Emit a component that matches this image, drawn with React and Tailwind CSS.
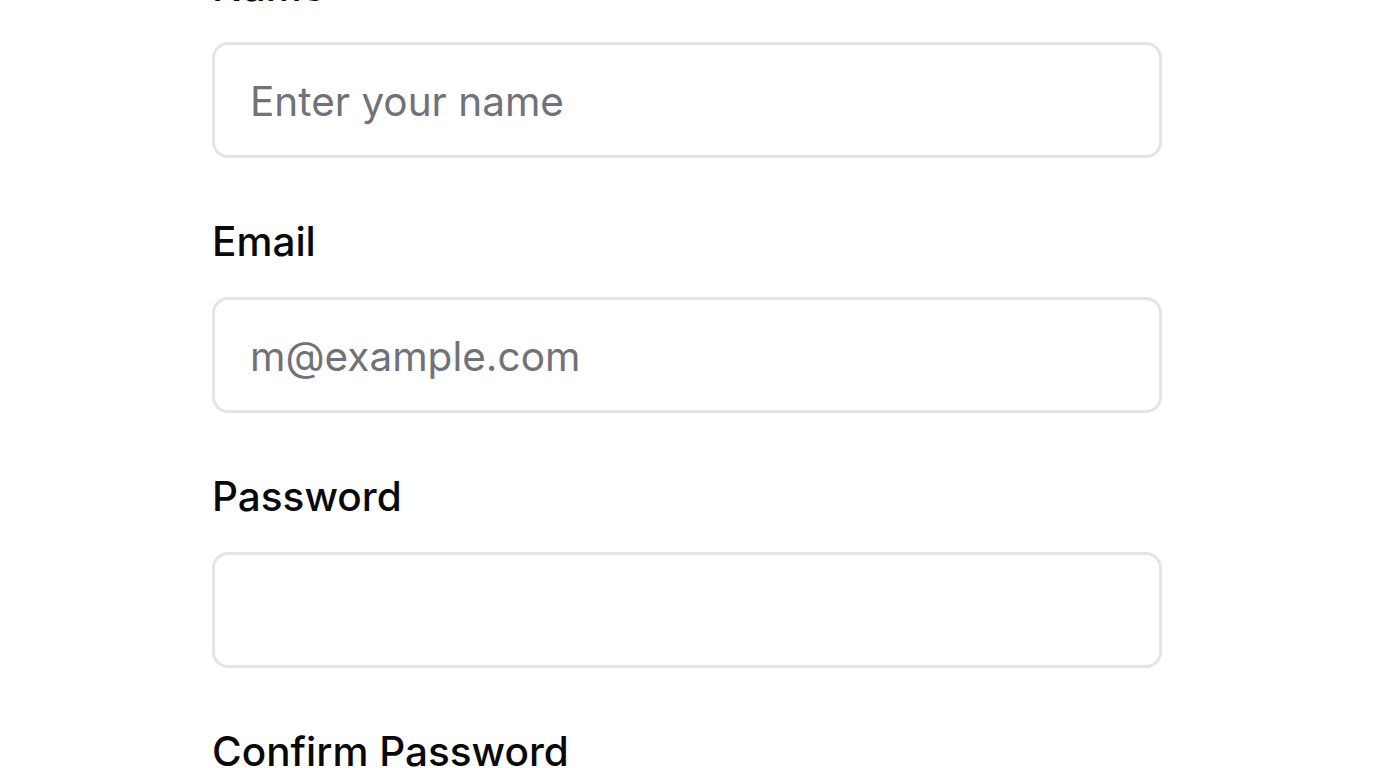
import React from "react";

const FIELDS = [
  { id: "name", label: "Name", type: "text", placeholder: "Enter your name" },
  { id: "email", label: "Email", type: "email", placeholder: "m@example.com" },
  { id: "password", label: "Password", type: "password", placeholder: "" },
  { id: "confirm", label: "Confirm Password", type: "password", placeholder: "" },
];

const Field = ({ id, label, type, placeholder }) => (
  <div className="flex flex-col gap-[35px]">
    <label
      htmlFor={id}
      className="text-[40.5px] leading-none font-medium text-[#09090b]"
    >
      {label}
    </label>
    <input
      id={id}
      type={type}
      placeholder={placeholder}
      className="h-[116px] w-full rounded-[16px] border-[3px] border-[#e4e4e7] bg-white px-[35px] pt-[3px] text-[40.5px] leading-[60px] text-[#09090b] placeholder:text-[#71717a] outline-none"
    />
  </div>
);

export default function App() {
  return (
    <div
      className="min-h-screen bg-white overflow-hidden"
      style={{ fontFamily: "Inter, 'Noto Sans', sans-serif" }}
    >
      <form className="-mt-[33.5px] ml-[212px] w-[950px] flex flex-col gap-[63.5px]">
        {FIELDS.map((f) => (
          <Field key={f.id} {...f} />
        ))}
      </form>
    </div>
  );
}
